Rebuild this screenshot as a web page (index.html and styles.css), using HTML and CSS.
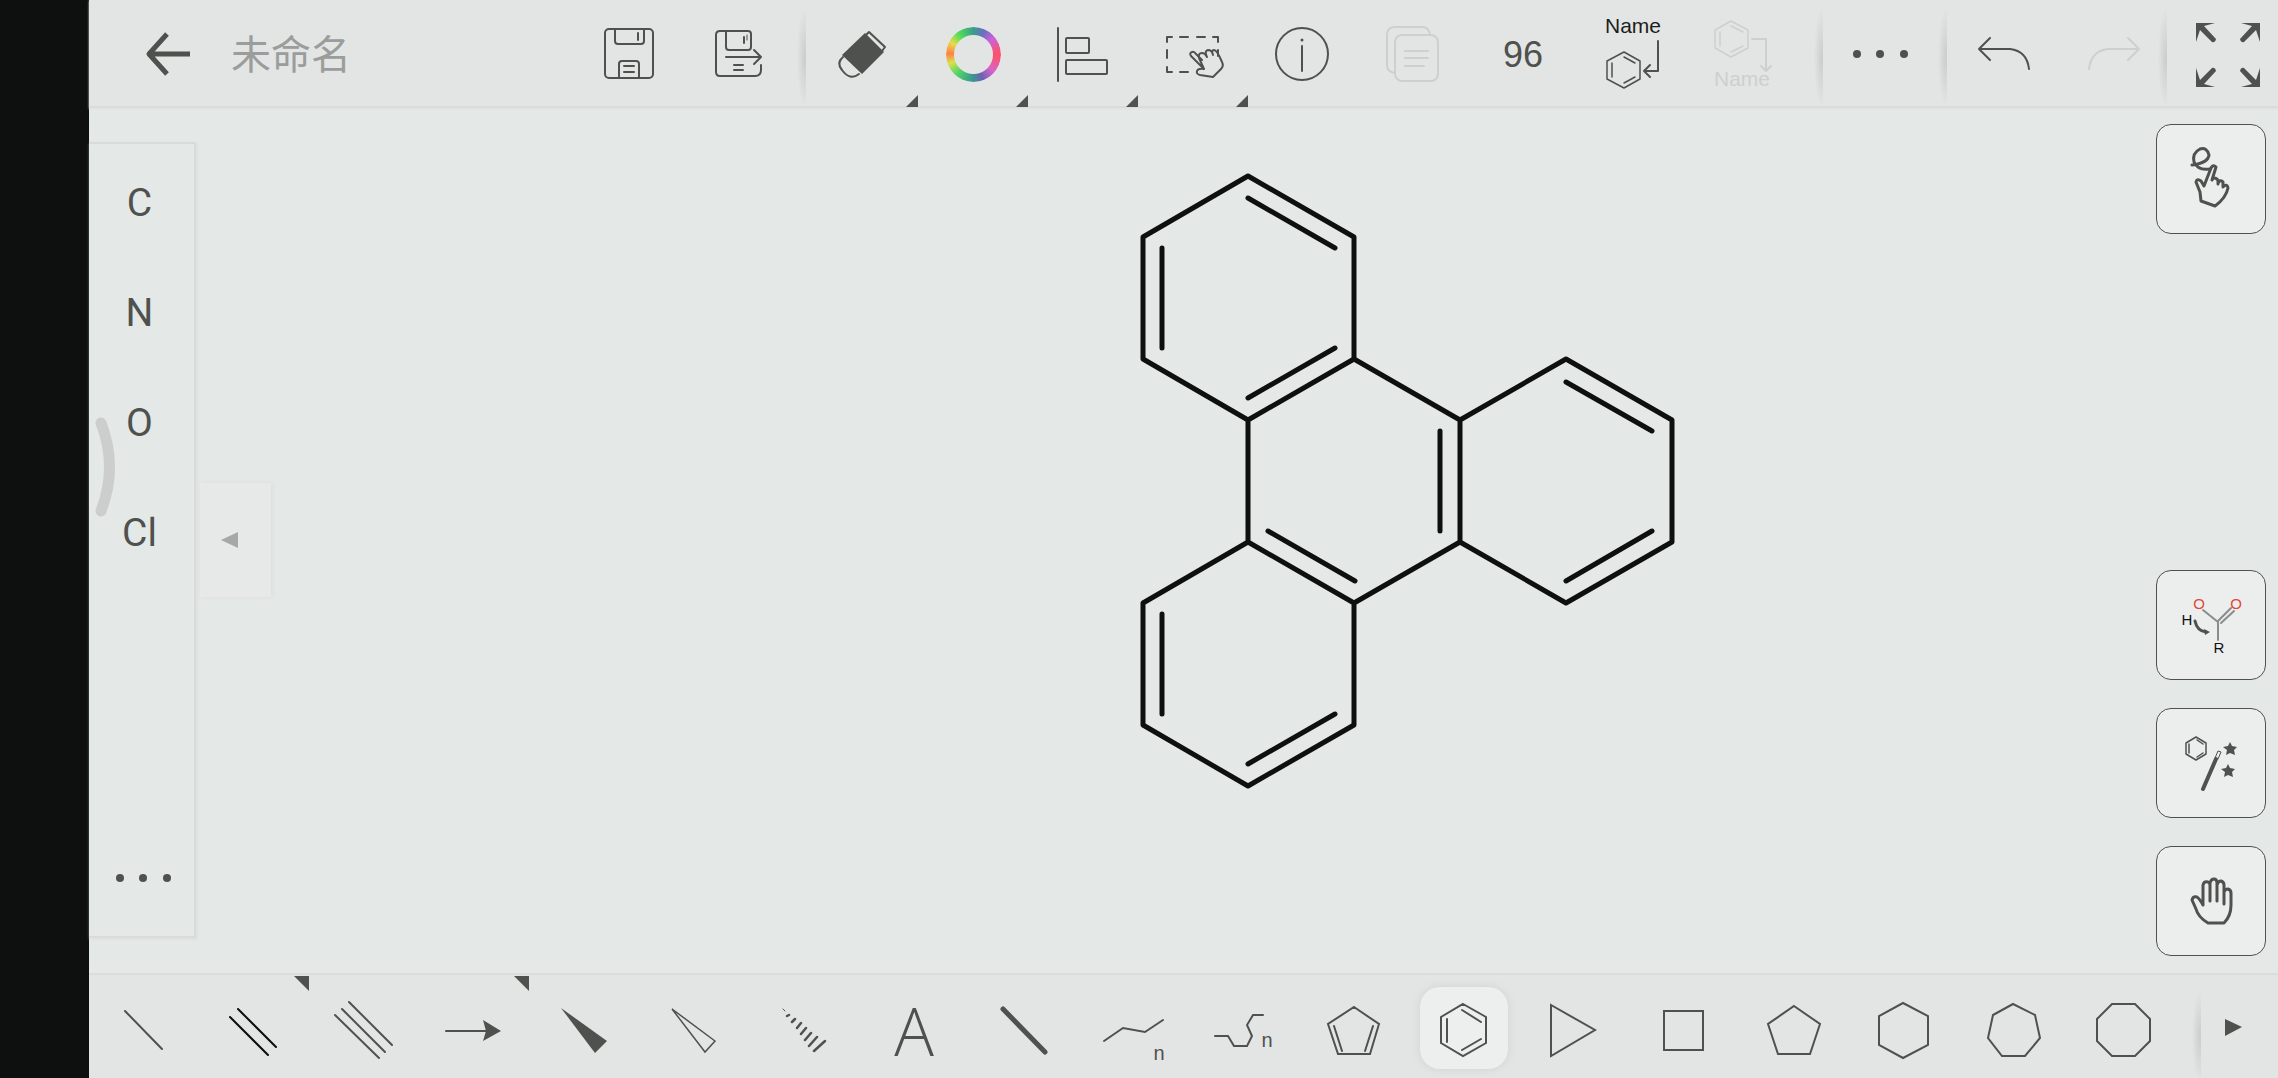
FILE: index.html
```html
<!DOCTYPE html>
<html lang="zh">
<head>
<meta charset="utf-8">
<meta name="viewport" content="width=device-width, initial-scale=1">
<title>未命名</title>
<link rel="stylesheet" href="styles.css">
</head>
<body>
<div class="bezel"></div>
<div class="app">
  <header class="topbar">
    <button class="back" aria-label="Back"><svg width="60" height="60" viewBox="0 0 60 60"><path d="M52 30H11M29 10L11 30L29 50" stroke-width="5"/></svg></button>
    <input class="title" type="text" value="未命名" aria-label="Document name">
    <button class="tool" aria-label="Save"><svg viewBox="0 0 110 106"><rect x="31" y="29" width="48" height="49" rx="4"/><path d="M41 29V41Q41 44 44 44H67Q70 44 70 41V29M64 33V40M45 78V64Q45 61 48 61H62Q65 61 65 64V78M50 66H60M50 72H60"/></svg></button>
    <button class="tool" aria-label="Save as"><svg viewBox="0 0 110 106"><path d="M67 34Q67 31 64 31H36Q32 31 32 35V72Q32 76 36 76H71Q77 76 77 70V65M42 31V47Q42 50 45 50H64Q67 50 67 47V34M60 37V43M42 57H77M70 50L77 57L70 64M50 65H59M50 70H59"/><path d="M63 35V40" stroke-width="1"/></svg></button>
    <span class="sep"></span>
    <button class="tool menu" aria-label="Eraser"><svg viewBox="0 0 110 106"><path class="fill" d="M57 33L76 52L54 74L34 55Z"/><path d="M58 35L61 32L77 47L74 51M35 57Q28 63 34 70Q42 81 51 74"/></svg></button>
    <button class="tool menu" aria-label="Colour"><span class="ring"></span></button>
    <button class="tool menu" aria-label="Align"><svg viewBox="0 0 110 106"><path d="M30 28V81"/><rect x="38" y="38" width="23" height="15" rx="1"/><rect x="38" y="60" width="41" height="14" rx="1"/></svg></button>
    <button class="tool menu" aria-label="Select"><svg viewBox="0 0 110 106"><path d="M29 42V37H34M42 37H50M59 37H67M75 37H80V42M80 50V56M29 50V58M29 67V72H34M42 72H50"/><path d="M66 69L53 56Q51 53 54 52Q56 51 58 54L64 60M61 58Q60 53 64 53Q67 53 69 57Q66 51 70 50Q74 50 75 55Q73 50 76 50Q79 50 84 62Q86 66 83 69L75 77L62 75Q58 74 59 71Q60 68 66 69Z"/></svg></button>
    <button class="tool" aria-label="Info"><svg viewBox="0 0 110 106"><circle cx="54" cy="54" r="26"/><path d="M54 46V71"/><circle class="fill" cx="54" cy="40" r="1.5"/></svg></button>
    <button class="tool off" aria-label="Copy" disabled><svg viewBox="0 0 110 106"><path d="M37 73Q29 72 29 65V35Q29 27 37 27H64Q71 27 72 35"/><rect x="37" y="35" width="43" height="46" rx="7"/><path d="M47 51H70M47 58H70M47 66H66"/></svg></button>
    <button class="tool count">96</button>
    <button class="tool" aria-label="Name to structure"><svg viewBox="0 0 110 106"><text class="name" x="27" y="33">Name</text><path d="M46 52L62 61V79L46 88L29 79V61ZM34 63V77M46 57L57 63M57 77L46 83" stroke-width="1.5"/><path d="M80 41V71H66M72 65L66 71L72 77"/></svg></button>
    <button class="tool off" aria-label="Structure to name" disabled><svg viewBox="0 0 110 106"><path d="M43 21L60 30V48L43 57L27 48V30ZM32 32V46M43 26L55 32M55 46L43 52" stroke-width="1.5"/><path d="M64 39H78V71M73 66L78 71L83 66"/><text class="name" x="26" y="86">Name</text></svg></button>
    <span class="sep wide"></span>
    <button class="tool" aria-label="More"><svg viewBox="0 0 110 106"><g class="fill"><circle cx="32" cy="54" r="4"/><circle cx="55" cy="54" r="4"/><circle cx="79" cy="54" r="4"/></g></svg></button>
    <span class="sep"></span>
    <button class="tool" aria-label="Undo"><svg viewBox="0 0 110 106"><path d="M41 38L30 49L41 60M30 49H61Q78 51 80 69"/></svg></button>
    <button class="tool off" aria-label="Redo" disabled><svg viewBox="0 0 110 106"><path d="M69 38L80 49L69 60M80 49H49Q32 51 30 69"/></svg></button>
    <span class="sep over"></span>
    <button class="tool full" aria-label="Full screen"><svg viewBox="0 0 100 106"><g class="fill"><path d="M18 23H37L26 26L38 39Q37 43 34 42L22 30L18 42Z"/><path d="M82 23H63L74 26L62 39Q63 43 66 42L78 30L82 42Z"/><path d="M18 87H37L26 84L38 71Q37 67 34 68L22 80L18 68Z"/><path d="M82 87H63L74 84L62 71Q63 67 66 68L78 80L82 68Z"/></g></svg></button>
  </header>

  <main class="canvas">
    <svg class="molecule" viewBox="1140 172 536 618" role="img" aria-label="Triphenylene">
      <path d="M1248 176L1354 237V359L1248 420L1143 359V237ZM1354 359L1460 420V542L1354 603L1248 542V420M1460 420L1566 359L1672 420V542L1566 603L1460 542M1354 603V725L1248 786L1143 725V603L1248 542"/>
      <path d="M1162 248V348M1248 198L1335 248M1335 348L1248 398M1440 431V531M1268 531L1355 581M1566 382L1652 431M1652 531L1566 581M1162 614V714M1335 714L1248 764"/>
    </svg>
    <nav class="atoms" aria-label="Elements">
      <button>C</button><button>N</button><button>O</button><button>Cl</button>
      <button class="more" aria-label="More elements"><svg width="60" height="12" viewBox="0 0 60 12"><g class="fill"><circle cx="7" cy="6" r="4"/><circle cx="30" cy="6" r="4"/><circle cx="54" cy="6" r="4"/></g></svg></button>
    </nav>
    <svg class="edge" viewBox="0 0 28 100" aria-hidden="true"><path d="M12 6Q29 50 12 94"/></svg>
    <button class="collapse" aria-label="Collapse panel"><svg width="18" height="18" viewBox="0 0 18 18"><path d="M0 9L17 1V17Z"/></svg></button>
    <div class="actions">
      <button class="card first" aria-label="Gesture drawing"><svg viewBox="0 0 108 108"><path d="M35 40Q51 38 52 30Q50 22 43 24Q35 28 37 37Q41 46 53 44"/><path d="M47 61L54 43Q56 39 59 42L55 55Q57 51 61 55V59Q62 54 66 57V62Q70 58 71 63Q69 73 58 81L44 76L43 67L39 57Q40 53 44 56L47 61"/></svg></button>
      <button class="card" aria-label="Reaction mechanism"><svg viewBox="0 0 108 108"><g class="gray"><path d="M46 39L61 51V69M61 50L74 37M64 52L77 40"/></g><path d="M38 50Q40 60 49 61"/><path class="fill" d="M53 61L47 58L48 64Z"/><text class="atom red" x="42" y="38">O</text><text class="atom red" x="79" y="38">O</text><text class="atom" x="30" y="54">H</text><text class="atom" x="62" y="82">R</text></svg></button>
      <button class="card" aria-label="Clean up structure"><svg viewBox="0 0 108 108"><path d="M39 28L49 34V45L39 51L29 45V34ZM32 35V44M40 31L46 35M46 44L40 48" stroke-width="1.5"/><path d="M46 80L59 50" stroke-width="4"/><path d="M58 49L61 42L64 43L61 50" stroke-width="1"/><path class="fill" d="M73 33L75 37L80 38L77 41L78 46L73 44L69 46L70 41L66 38L71 37ZM71 55L73 59L78 60L75 63L76 68L71 66L67 68L68 63L64 60L69 59Z"/></svg></button>
      <button class="card" aria-label="Pan"><svg viewBox="0 0 108 108"><path d="M46 58V38Q47 34 51 35Q53 36 53 38V54V36Q54 32 57 32Q60 32 60 36V54V38Q61 34 64 34Q67 35 67 38V57V45Q68 42 71 42Q74 43 74 46V58Q74 69 67 76H51Q41 70 39 62L35 53Q36 49 40 50Q42 51 46 58"/></svg></button>
    </div>
  </main>

  <footer class="bonds">
    <button aria-label="Single bond"><svg viewBox="0 0 110 104"><path d="M36 37L73 75"/></svg></button>
    <button class="menu" aria-label="Double bond"><svg viewBox="0 0 110 104"><path class="ink" d="M31 43L69 81M39 35L77 73"/></svg></button>
    <button aria-label="Triple bond"><svg viewBox="0 0 110 104"><path d="M26 41L70 84M33 35L76 78M40 28L83 71"/></svg></button>
    <button class="menu" aria-label="Arrow"><svg viewBox="0 0 110 104"><path d="M27 57H68"/><path class="fill" d="M64 46L82 57L64 67L67 57Z"/></svg></button>
    <button aria-label="Wedge bond"><svg viewBox="0 0 110 104"><path class="fill" d="M32 34L78 67L66 79Z"/></svg></button>
    <button aria-label="Hollow wedge bond"><svg viewBox="0 0 110 104"><path d="M33 35L76 67L66 78Z" stroke-width="1.5"/></svg></button>
    <button aria-label="Hashed bond"><svg viewBox="0 0 110 104"><path d="M34 35L36 37" stroke-width="1"/><path d="M38 42L40 41M43 48L46 45M48 54L52 49M52 60L57 54M56 66L62 59M60 72L68 63M65 77L76 67" stroke-width="2.5"/></svg></button>
    <button class="letter">A</button>
    <button aria-label="Bold bond"><svg viewBox="0 0 110 104"><path d="M34 35L76 78" stroke-width="5"/></svg></button>
    <button aria-label="Chain"><svg viewBox="0 0 110 104"><path d="M25 67L44 54L66 58L84 46"/><text class="sub" x="80" y="86">n</text></svg></button>
    <button aria-label="Free chain"><svg viewBox="0 0 110 104"><path d="M26 62H39L45 72H58L63 62L58 51L64 41H74"/><text class="sub" x="78" y="73">n</text></svg></button>
    <button aria-label="Cyclopentadiene"><svg viewBox="0 0 110 104"><path d="M55 33L80 50L71 80H39L29 50ZM35 52L43 77M74 52L66 77"/></svg></button>
    <button class="on" aria-label="Benzene" aria-pressed="true"><svg viewBox="0 0 110 104"><path d="M54 30L77 43V69L54 82L32 69V43ZM38 45V68M53 36L72 48M72 65L53 76"/></svg></button>
    <button aria-label="Cyclopropane"><svg viewBox="0 0 110 104"><path d="M32 31L76 56L32 82Z"/></svg></button>
    <button aria-label="Cyclobutane"><svg viewBox="0 0 110 104"><path d="M35 37H74V76H35Z"/></svg></button>
    <button aria-label="Cyclopentane"><svg viewBox="0 0 110 104"><path d="M55 32L81 50L71 80H39L29 50Z"/></svg></button>
    <button aria-label="Cyclohexane"><svg viewBox="0 0 110 104"><path d="M54 29L79 42V71L54 84L30 71V42Z"/></svg></button>
    <button aria-label="Cycloheptane"><svg viewBox="0 0 110 104"><path d="M54 30L76 41L81 64L66 82H43L29 64L34 41Z"/></svg></button>
    <button aria-label="Cyclooctane"><svg viewBox="0 0 110 104"><path d="M43 30H66L81 45V67L66 82H43L28 67V45Z"/></svg></button>
    <button class="next" aria-label="Next page"><svg viewBox="0 0 99 104"><path class="fill" d="M46 45L63 53L46 62Z"/></svg></button>
  </footer>
</div>
</body>
</html>
```
FILE: styles.css
```css
* { box-sizing: border-box; }

body {
  margin: 0;
  display: flex;
  min-height: 100vh;
  background: #e4e8e6;
  color: #4f514f;
  font-family: Roboto, "Noto Sans CJK SC", sans-serif;
}

button {
  position: relative;
  display: flex;
  align-items: center;
  justify-content: center;
  margin: 0;
  padding: 0;
  border: 0;
  background: none;
  color: inherit;
  font: inherit;
}

svg {
  display: block;
  fill: none;
  stroke: currentColor;
  stroke-width: 2;
  stroke-linejoin: round;
  stroke-linecap: round;
}

svg text,
.fill {
  fill: currentColor;
  stroke: none;
}

.bezel {
  flex: 0 0 89px;
  background: #0d100e;
}

.app {
  flex: 1;
  min-width: 0;
  display: flex;
  flex-direction: column;
}

/* Top toolbar */
.topbar {
  position: relative;
  display: flex;
  height: 108px;
  background: #e2e5e3;
  border-bottom: 2px solid #d9dcda;
  box-shadow: 0 1px 2px #dee1df;
}

.back {
  flex: 0 0 142px;
  padding: 2px 0 0 16px;
}

.back svg { stroke-linecap: butt; }

.title {
  flex: 1;
  min-width: 0;
  padding: 0 0 2px;
  border: 0;
  background: none;
  color: #9a9d9b;
  font: 400 40px "Noto Sans CJK SC", sans-serif;
}

.tool { flex: 0 0 110px; }

.tool svg {
  width: 100%;
  height: 106px;
}

.topbar .menu::after {
  content: "";
  position: absolute;
  right: 0;
  bottom: -1px;
  width: 12px;
  height: 12px;
  background: #4f514f;
  clip-path: polygon(100% 0, 100% 100%, 0 100%);
}

.off { color: #cdd0ce; }

/* Soft divider: darkest at its right side, open above and below */
.sep {
  flex: 0 0 14px;
  background: radial-gradient(ellipse 8px 50px at 11px 58px, #cacdcb, transparent) 0 0 / 12px 100% no-repeat;
}

.sep.wide { margin-left: 13px; }
.sep.over { margin-left: -14px; }

.full {
  flex-basis: 100px;
  margin-left: 9px;
}

.ring {
  width: 55px;
  height: 55px;
  margin-top: 2px;
  border-radius: 50%;
  background: conic-gradient(#3a9c8c, #6a6fc0 25deg, #cc62dc 50deg, #ff5064 90deg, #d864c8 130deg, #6a62b4 160deg, #3a9c8c 185deg, #50d468 220deg, #dce04c 250deg, #ff8046 272deg, #e6dc4c 298deg, #50dc5a 325deg, #3a9c8c);
  mask: radial-gradient(circle, transparent 19px, #000 20px);
}

.count {
  padding-top: 4px;
  font-family: "Liberation Sans", sans-serif;
  font-size: 36px;
}

.name {
  font: 21px "Liberation Sans", sans-serif;
}

.tool:not(.off) .name { fill: #1c1d1c; }

/* Drawing area */
.canvas {
  position: relative;
  flex: 1;
  display: flex;
  align-items: stretch;
}

.molecule {
  position: absolute;
  left: 1051px;
  top: 64px;
  width: 536px;
  height: 618px;
  color: #0e100f;
  stroke-width: 5;
}

.atoms {
  display: flex;
  flex-direction: column;
  width: 107px;
  margin: 34px 0 35px;
  padding: 4px 4px 3px 0;
  border: 2px solid #d8dbd9;
  border-left: 0;
  box-shadow: 1px 1px 3px #dadddb;
}

.atoms button {
  height: 110px;
  font-size: 39px;
}

.atoms .more {
  margin-top: auto;
  padding-left: 6px;
}

.edge {
  position: absolute;
  left: 0;
  top: 309px;
  width: 28px;
  height: 100px;
  color: #cbcecc;
  stroke-width: 11;
}

.collapse {
  align-self: flex-start;
  width: 71px;
  height: 114px;
  margin: 375px 0 0 4px;
  padding-right: 12px;
  background: #e6e9e7;
  box-shadow: 1px 0 4px #dadddb;
}

.collapse path {
  fill: #a5a8a6;
  stroke: none;
}

.actions {
  display: flex;
  flex-direction: column;
  gap: 28px;
  margin-left: auto;
  padding: 16px 12px 17px 0;
}

.card {
  width: 110px;
  height: 110px;
  border: 1px solid #4f514f;
  border-radius: 15px;
  background: #ebeeec;
}

.card.first { margin-bottom: auto; }

.card svg {
  width: 108px;
  height: 108px;
  stroke-width: 3;
}

.gray { stroke: #8b8d8c; stroke-width: 2; }

.card .atom {
  font: 15px "Liberation Sans", sans-serif;
  text-anchor: middle;
  fill: #111;
}

.card .red { fill: #e0483c; }

/* Bond and ring toolbar */
.bonds {
  display: flex;
  height: 105px;
  background: #e2e5e3;
  border-top: 2px solid #dadddb;
}

.bonds button {
  flex: 1;
  min-width: 0;
}

.bonds svg {
  position: relative;
  width: 100%;
  height: 104px;
  margin-bottom: 2px;
  stroke-linejoin: miter;
}

.bonds .menu::after {
  content: "";
  position: absolute;
  right: 0;
  top: 1px;
  width: 15px;
  height: 15px;
  background: #4f514f;
  clip-path: polygon(0 0, 100% 0, 100% 100%);
}

.bonds .on::before {
  content: "";
  position: absolute;
  inset: 12px 11px 9px;
  border-radius: 20px;
  background: #ecefed;
  box-shadow: 0 0 8px #cfd2d0;
}

.bonds .next {
  flex: 0 0 99px;
  background: radial-gradient(ellipse 8px 46px at 21px 62px, #cacdcb, transparent) 0 0 / 22px 100% no-repeat;
}

.ink { stroke: #0c0d0c; }

.bonds .letter {
  padding-top: 6px;
  font: 300 66px/1 "Open Sans", sans-serif;
}

.sub {
  font: 20px "Liberation Sans", sans-serif;
  text-anchor: middle;
}
```
